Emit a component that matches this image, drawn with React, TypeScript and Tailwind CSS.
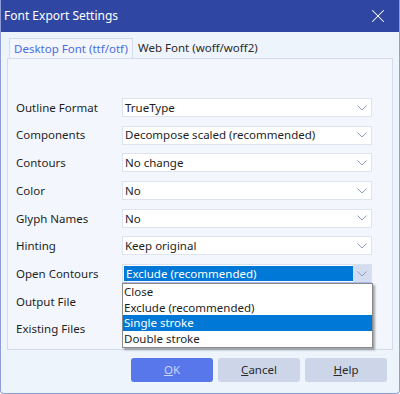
import { X } from "lucide-react";

const rows = [
  { label: "Outline Format", value: "TrueType" },
  { label: "Components", value: "Decompose scaled (recommended)" },
  { label: "Contours", value: "No change" },
  { label: "Color", value: "No" },
  { label: "Glyph Names", value: "No" },
  { label: "Hinting", value: "Keep original" },
  { label: "Open Contours", value: "Exclude (recommended)", open: true },
  { label: "Output File", value: "" },
  { label: "Existing Files", value: "" },
];

const options = ["Close", "Exclude (recommended)", "Single stroke", "Double stroke"];

function Chevron({ className = "" }: { className?: string }) {
  return (
    <svg width="10" height="6" viewBox="0 0 10 6" className={className}>
      <path d="M0.5 0.5 L5 5 L9.5 0.5" fill="none" stroke="#8d9cc4" strokeWidth="1" />
    </svg>
  );
}

export default function App() {
  return (
    <div
      className="w-[400px] h-[394px] bg-[#eef4fc] border border-[#8e9dd8] border-t-0 rounded-b-[4px] flex flex-col overflow-hidden text-[11.5px] text-[#1e1e1e]"
      style={{ fontFamily: '"Noto Sans", "Open Sans", sans-serif' }}
    >
      {/* Title bar */}
      <div className="h-[32px] bg-[#2f47a2] flex items-center justify-between pl-[4px] pr-[11px] text-white shrink-0 -mx-px">
        <span className="text-[12px] leading-none">Font Export Settings</span>
        <X className="w-[22px] h-[22px]" strokeWidth={1.1} />
      </div>

      <div className="px-[6px] pt-[5px] flex flex-col flex-1">
        {/* Tabs */}
        <div className="flex items-end h-[21px] pl-[2px]">
          <div className="h-[21px] w-[124px] border border-b-0 border-[#d3dcec] bg-[#f3f7fd] flex items-center justify-center text-[#4b6be0] relative top-px">
            Desktop Font (ttf/otf)
          </div>
          <div className="h-[20px] px-[5px] flex items-center text-[#2a2a2a]">Web Font (woff/woff2)</div>
        </div>

        {/* Panel */}
        <div className="h-[292px] border border-[#d3dcec] bg-[#f3f7fd] pt-[39px] pl-[8px] pr-[20px] relative">
          <div className="flex flex-col gap-[8.7px]">
            {rows.map((r) => (
              <div key={r.label} className="flex items-center h-[19px]">
                <div className="w-[106px] shrink-0 leading-none">{r.label}</div>
                {r.open ? (
                  <div className="flex-1 h-[19px] flex bg-white border border-[#d9e1ee] border-b-[#a9bbef]">
                    <div className="flex-1 bg-[#0078d7] text-white flex items-center pl-[2px] m-px mr-0 leading-none">
                      {r.value}
                    </div>
                    <div className="w-[18px] bg-[#d4dcef] flex items-center justify-center">
                      <Chevron />
                    </div>
                  </div>
                ) : (
                  <div className="flex-1 h-[19px] bg-white border border-[#dde4ef] flex items-center justify-between pl-[2px] pr-[4px] leading-none">
                    <span>{r.value}</span>
                    <Chevron />
                  </div>
                )}
              </div>
            ))}
          </div>

          {/* Open dropdown list */}
          <div className="absolute left-[114px] top-[224px] w-[251px] bg-white border border-[#8a8a8a] shadow-[2px_2px_2px_rgba(0,0,0,0.35)]">
            {options.map((o) => (
              <div
                key={o}
                className={`h-[15.7px] flex items-center pl-px leading-none ${o === "Single stroke" ? "bg-[#0078d7] text-white" : ""}`}
              >
                {o}
              </div>
            ))}
          </div>
        </div>

        {/* Buttons */}
        <div className="flex justify-end gap-[5px] mt-[8px] pr-[6px]">
          <button className="w-[82px] h-[24px] rounded-[3px] bg-[#5877ea] text-[#c9d4fb]">
            <span className="underline">O</span>K
          </button>
          <button className="w-[82px] h-[24px] rounded-[3px] bg-[#cdd6e8] text-[#2a2a2a]">
            <span className="underline">C</span>ancel
          </button>
          <button className="w-[82px] h-[24px] rounded-[3px] bg-[#cdd6e8] text-[#2a2a2a]">
            <span className="underline">H</span>elp
          </button>
        </div>
      </div>
    </div>
  );
}
